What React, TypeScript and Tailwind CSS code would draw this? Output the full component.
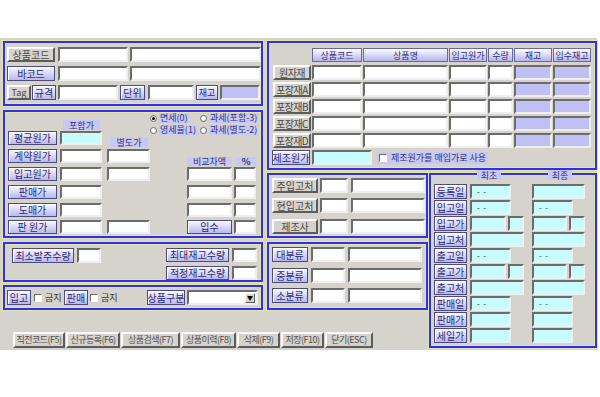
import type { ReactNode } from "react";
import { twMerge } from "tailwind-merge";

type P = { className?: string; children?: ReactNode };

const Panel = ({ className = "", children }: P) => (
  <div className={`border-2 border-[#2f2ff0] shadow-[0_0_0_1px_#e4e4a8,inset_0_0_0_1px_#e4e4a8] ${className}`}>
    {children}
  </div>
);

// gray raised button
const GBtn = ({ className = "", children }: P) => (
  <div
    className={twMerge(
      "flex h-[15px] shrink-0 items-center justify-center whitespace-nowrap border-2 border-t-[#fafafa] border-l-[#fafafa] border-b-[#5c5c5c] border-r-[#5c5c5c] bg-[#d6d2cc] text-[10px] leading-none text-[#4a4a4a]",
      className
    )}
  >
    {children}
  </div>
);

// lavender button
const LBtn = ({ className = "", children }: P) => (
  <div
    className={twMerge(
      "flex h-[15px] shrink-0 items-center justify-center whitespace-nowrap border border-[#4c4c7c] bg-linear-to-b from-[#f8f8ff] to-[#b8b8ee] text-[10px] leading-none text-[#2c2c74] shadow-[inset_1px_1px_0_#ffffff]",
      className
    )}
  >
    {children}
  </div>
);

const Field = ({ className = "", children }: P) => (
  <div
    className={twMerge(
      "flex h-[15px] shrink-0 items-center border-2 border-t-[#6c6c6c] border-l-[#6c6c6c] border-b-[#efefef] border-r-[#efefef]",
      className
    )}
  >
    {children}
  </div>
);

const Tag = ({ className = "", children }: P) => (
  <div
    className={twMerge(
      "flex shrink-0 items-center justify-center bg-[#c8c8f4] text-[9px] leading-none text-[#34347a]",
      className
    )}
  >
    {children}
  </div>
);

const Check = () => (
  <span className="inline-block h-[8px] w-[8px] shrink-0 border border-t-[#6c6c6c] border-l-[#6c6c6c] border-b-white border-r-white bg-white" />
);

const Radio = ({ on, className = "", children }: P & { on?: boolean }) => (
  <div className={`flex items-center gap-[2px] ${className}`}>
    <span className="flex h-[7px] w-[7px] items-center justify-center rounded-full border border-[#6a6a6a] bg-white">
      {on && <span className="h-[3px] w-[3px] rounded-full bg-black" />}
    </span>
    <span className="bg-[#c8c8f4] px-[1px] text-[9px] leading-[10px] text-[#34347a]">{children}</span>
  </div>
);

const Dash = () => <span className="pl-[5px] text-[8px] leading-none text-[#333]">-&nbsp;&nbsp;-</span>;

const ProductPanel = () => (
  <Panel className="col-start-1 row-start-1 flex flex-col gap-[4px] pt-[4px]">
    <div className="flex pl-[2px]">
      <GBtn className="w-[48px]">상품코드</GBtn>
      <Field className="ml-[3px] w-[70px] bg-white" />
      <Field className="ml-[2px] w-[131px] bg-white" />
    </div>
    <div className="flex pl-[2px]">
      <LBtn className="w-[48px]">바코드</LBtn>
      <Field className="ml-[3px] w-[70px] bg-white" />
      <Field className="ml-[2px] w-[131px] bg-white" />
    </div>
    <div className="flex pl-[2px]">
      <GBtn className="w-[24px] text-[9px]">Tag</GBtn>
      <LBtn className="ml-[1px] w-[24px]">규격</LBtn>
      <Field className="ml-[2px] w-[60px] bg-white" />
      <LBtn className="ml-[2px] w-[25px]">단위</LBtn>
      <Field className="ml-[3px] w-[46px] bg-white" />
      <LBtn className="ml-[2px] w-[22px] text-[9px]">재고</LBtn>
      <Field className="ml-[2px] w-[40px] bg-[#c0c0f4]" />
    </div>
  </Panel>
);

const PricePanel = () => (
  <Panel className="col-start-1 row-start-3 row-span-3 flex flex-col">
    <div className="flex h-[19px]">
      <Tag className="ml-[58px] mt-[8px] h-[10px] w-[37px]">포함가</Tag>
      <div className="ml-[50px] mt-[1px] flex flex-col gap-[2px]">
        <div className="flex">
          <Radio on className="w-[50px]">면세(0)</Radio>
          <Radio>과세(포함-3)</Radio>
        </div>
        <div className="flex">
          <Radio className="w-[50px]">영세율(1)</Radio>
          <Radio>과세(별도-2)</Radio>
        </div>
      </div>
    </div>
    <div className="flex h-[14px]">
      <LBtn className="ml-[3px] h-[14px] w-[49px]">평균원가</LBtn>
      <Field className="ml-[3px] h-[14px] w-[42px] bg-[#c8fcfc]" />
      <Tag className="ml-[8px] mt-[6px] h-[10px] w-[38px]">별도가</Tag>
    </div>
    <div className="mt-[4px] flex h-[14px]">
      <LBtn className="ml-[3px] h-[14px] w-[49px]">계약원가</LBtn>
      <Field className="ml-[3px] h-[14px] w-[42px] bg-white" />
      <Field className="ml-[5px] h-[14px] w-[43px] bg-white" />
      <Tag className="ml-[37px] mt-[8px] h-[9px] w-[45px]">비교차액</Tag>
      <Tag className="ml-[4px] mt-[8px] h-[9px] w-[20px] font-bold">%</Tag>
    </div>
    <div className="mt-[4px] flex h-[14px]">
      <LBtn className="ml-[3px] h-[14px] w-[49px]">입고원가</LBtn>
      <Field className="ml-[3px] h-[14px] w-[42px] bg-white" />
      <Field className="ml-[5px] h-[14px] w-[43px] bg-white" />
      <Field className="ml-[37px] h-[14px] w-[45px] bg-white" />
      <Field className="ml-[2px] h-[14px] w-[22px] bg-white" />
    </div>
    <div className="mt-[4px] flex h-[14px]">
      <LBtn className="ml-[3px] h-[14px] w-[49px]">판매가</LBtn>
      <Field className="ml-[3px] h-[14px] w-[42px] bg-white" />
      <Field className="ml-[85px] h-[14px] w-[45px] bg-white" />
      <Field className="ml-[2px] h-[14px] w-[22px] bg-white" />
    </div>
    <div className="mt-[4px] flex h-[14px]">
      <LBtn className="ml-[3px] h-[14px] w-[49px]">도매가</LBtn>
      <Field className="ml-[3px] h-[14px] w-[42px] bg-white" />
      <Field className="ml-[85px] h-[14px] w-[45px] bg-white" />
      <Field className="ml-[2px] h-[14px] w-[22px] bg-white" />
    </div>
    <div className="mt-[3px] flex h-[14px]">
      <LBtn className="ml-[3px] h-[14px] w-[49px]">판 원가</LBtn>
      <Field className="ml-[3px] h-[14px] w-[42px] bg-white" />
      <Field className="ml-[5px] h-[14px] w-[43px] bg-white" />
      <LBtn className="ml-[37px] h-[14px] w-[45px]">입수</LBtn>
      <Field className="ml-[2px] h-[14px] w-[22px] bg-white" />
    </div>
  </Panel>
);

const StockPanel = () => (
  <Panel className="col-start-1 row-start-7 flex">
    <div className="ml-[7px] mt-[4px] flex">
      <LBtn className="w-[62px]">최소발주수량</LBtn>
      <Field className="ml-[3px] w-[24px] bg-white" />
    </div>
    <div className="ml-[65px] flex flex-col">
      <div className="mt-[4px] flex">
        <LBtn className="h-[14px] w-[63px]">최대재고수량</LBtn>
        <Field className="ml-[3px] h-[14px] w-[25px] bg-white" />
      </div>
      <div className="mt-[4px] flex">
        <LBtn className="h-[14px] w-[63px]">적정재고수량</LBtn>
        <Field className="ml-[3px] h-[14px] w-[25px] bg-white" />
      </div>
    </div>
  </Panel>
);

const FlagPanel = () => (
  <Panel className="col-start-1 row-start-9 flex items-center">
    <LBtn className="ml-[2px] w-[24px]">입고</LBtn>
    <div className="ml-[3px] flex w-[30px] items-center gap-[3px] text-[9px] text-[#333]">
      <Check />
      금지
    </div>
    <LBtn className="w-[24px]">판매</LBtn>
    <div className="ml-[2px] flex w-[30px] items-center gap-[3px] text-[9px] text-[#333]">
      <Check />
      금지
    </div>
    <LBtn className="ml-[27px] w-[38px]">상품구분</LBtn>
    <Field className="ml-[2px] w-[71px] justify-end bg-white pr-[1px]">
      <span className="flex h-[10px] w-[10px] items-center justify-center border border-t-white border-l-white border-b-[#5c5c5c] border-r-[#5c5c5c] bg-[#d6d2cc] text-[6px] leading-none text-black">
        ▼
      </span>
    </Field>
  </Panel>
);

const matCols = [
  { name: "상품코드", w: "w-[50px]", bg: "bg-white" },
  { name: "상품명", w: "w-[85px]", bg: "bg-white" },
  { name: "입고원가", w: "w-[38px]", bg: "bg-white" },
  { name: "수량", w: "w-[25px]", bg: "bg-white" },
  { name: "재고", w: "w-[38px]", bg: "bg-[#c0c0f4]" },
  { name: "입수재고", w: "w-[38px]", bg: "bg-[#c0c0f4]" },
];

const MaterialPanel = () => (
  <Panel className="col-start-3 col-span-3 row-start-1 row-span-3 flex flex-col">
    <div className="mt-[5px] flex h-[14px] pl-[43px]">
      {matCols.map((c, i) => (
        <div
          key={c.name}
          className={`flex h-[14px] items-center justify-center border border-[#6a6a9a] bg-linear-to-b from-white to-[#b4b4ec] text-[9px] leading-none text-[#303080] ${c.w} ${i ? "ml-[1px]" : ""}`}
        >
          {c.name}
        </div>
      ))}
    </div>
    <div className="mt-[3px] flex flex-col gap-[2px]">
      {["원자재", "포장재A", "포장재B", "포장재C", "포장재D"].map((r) => (
        <div key={r} className="flex">
          <GBtn className="ml-[4px] w-[38px] tracking-[-0.5px]">{r}</GBtn>
          {matCols.map((c) => (
            <Field key={c.name} className={`ml-[1px] ${c.w} ${c.bg}`} />
          ))}
        </div>
      ))}
    </div>
    <div className="mt-[2px] flex items-center">
      <LBtn className="ml-[3px] w-[38px]">제조원가</LBtn>
      <Field className="ml-[2px] w-[60px] bg-[#c8fcfc]" />
      <div className="ml-[5px] flex h-[12px] items-center gap-[4px] bg-[#c8c8f4] px-[2px] text-[9px] leading-none text-[#34347a]">
        <Check />
        제조원가를 매입가로 사용
      </div>
    </div>
  </Panel>
);

const VendorPanel = () => (
  <Panel className="col-start-3 row-start-5 flex flex-col">
    {[
      ["주입고처", "mt-[3px]"],
      ["현입고처", "mt-[5px]"],
      ["제조사", "mt-[6px]"],
    ].map(([n, m]) => (
      <div key={n} className={`flex ${m}`}>
        <GBtn className="ml-[3px] w-[46px]">{n}</GBtn>
        <Field className="ml-[2px] w-[28px] bg-white" />
        <Field className="ml-[3px] w-[74px] bg-white" />
      </div>
    ))}
  </Panel>
);

const CategoryPanel = () => (
  <Panel className="col-start-3 row-start-7 row-span-3 flex flex-col">
    {[
      ["대분류", "mt-[3px]"],
      ["중분류", "mt-[6px]"],
      ["소분류", "mt-[5px]"],
    ].map(([n, m]) => (
      <div key={n} className={`flex ${m}`}>
        <LBtn className="ml-[3px] w-[36px]">{n}</LBtn>
        <Field className="ml-[3px] w-[34px] bg-white" />
        <Field className="ml-[3px] w-[74px] bg-white" />
      </div>
    ))}
  </Panel>
);

type Kind = "first" | "date" | "price" | "wide" | "plain";

const histRows: [string, Kind][] = [
  ["등록일", "first"],
  ["입고일", "date"],
  ["입고가", "price"],
  ["입고처", "wide"],
  ["출고일", "date"],
  ["출고가", "price"],
  ["출고처", "wide"],
  ["판매일", "date"],
  ["판매가", "plain"],
  ["세일가", "plain"],
];

const cyan = "bg-[#c8fcfc]";

const HistCells = ({ kind }: { kind: Kind }) => (
  <>
    <div className="ml-[3px] flex w-[54px]">
      {kind === "price" ? (
        <>
          <Field className={`w-[36px] ${cyan}`} />
          <Field className={`ml-[2px] w-[16px] ${cyan}`} />
        </>
      ) : kind === "wide" ? (
        <Field className={`w-[54px] ${cyan}`} />
      ) : (
        <Field className={`w-[41px] ${cyan}`}>{kind !== "plain" && <Dash />}</Field>
      )}
    </div>
    <div className="ml-[8px] flex">
      {kind === "price" ? (
        <>
          <Field className={`w-[35px] ${cyan}`} />
          <Field className={`ml-[2px] w-[16px] ${cyan}`} />
        </>
      ) : kind === "wide" || kind === "first" ? (
        <Field className={`w-[53px] ${cyan}`} />
      ) : (
        <Field className={`w-[41px] ${cyan}`}>{kind === "date" && <Dash />}</Field>
      )}
    </div>
  </>
);

const HistoryPanel = () => (
  <Panel className="col-start-5 row-start-5 row-span-7 flex flex-col">
    <div className="mt-[-5px] flex h-[10px]">
      <Tag className="ml-[46px] h-[10px] w-[24px]">최초</Tag>
      <Tag className="ml-[47px] h-[10px] w-[24px]">최종</Tag>
    </div>
    <div className="mt-[4px] flex flex-col gap-[1px]">
      {histRows.map(([n, k]) => (
        <div key={n} className="flex">
          <LBtn className="ml-[3px] w-[33px]">{n}</LBtn>
          <HistCells kind={k} />
        </div>
      ))}
    </div>
  </Panel>
);

const actions = [
  { t: "직전코드(F5)", w: "w-[52px]" },
  { t: "신규등록(F6)", w: "w-[54px]" },
  { t: "상품검색(F7)", w: "w-[59px]" },
  { t: "상품이력(F8)", w: "w-[55px]" },
  { t: "삭제(F9)", w: "w-[43px]" },
  { t: "저장(F10)", w: "w-[43px]" },
  { t: "닫기(ESC)", w: "w-[48px]" },
];

export default function App() {
  return (
    <div className="h-[397px] w-[600px] overflow-hidden bg-white font-['Noto_Sans_CJK_KR','Noto_Sans',sans-serif]">
      <div className="mt-[38px] h-[312px] w-[597px] bg-[#d6d2cc] pl-[3px] pt-[3px]">
        <div className="grid grid-cols-[260px_4px_161px_1px_168px] grid-rows-[65px_4px_60px_3px_65px_4px_40px_3px_25px_22px_16px]">
          <ProductPanel />
          <PricePanel />
          <StockPanel />
          <FlagPanel />
          <MaterialPanel />
          <VendorPanel />
          <CategoryPanel />
          <HistoryPanel />
          <div className="col-start-1 col-span-3 row-start-11 flex gap-[1px] pl-[10px]">
            {actions.map((a) => (
              <GBtn key={a.t} className={`h-[16px] text-[9px] tracking-[-0.5px] text-[#505050] ${a.w}`}>
                {a.t}
              </GBtn>
            ))}
          </div>
        </div>
      </div>
    </div>
  );
}
